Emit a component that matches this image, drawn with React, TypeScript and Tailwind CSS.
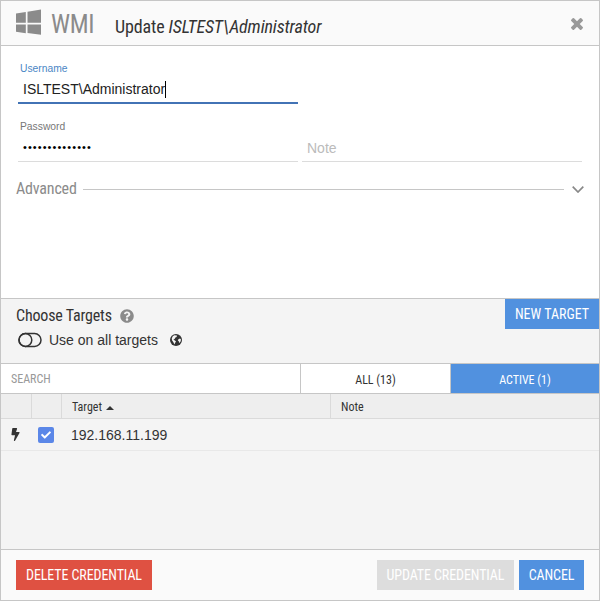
import React, { useState } from "react";
import { FaQuestionCircle, FaBolt, FaCheck } from "react-icons/fa";

const condensed = "font-['Roboto_Condensed','Roboto',sans-serif] font-stretch-condensed whitespace-nowrap";

const WindowsLogo = () => (
  <svg viewBox="0 0 25 26" className="mb-0.5 w-[25px] h-[26px]" fill="#8b8b8b">
    <path d="M0 4.6 9.8 3.1v10.6H0zM11.5 2.7 25 .4v13.3H11.5zM0 15.5h9.8v8.7L0 22.8zM11.5 15.5H25v10.3l-13.5-1.9z" />
  </svg>
);

const CloseIcon = () => (
  <svg viewBox="302 366 1188 1188" className="size-3" fill="#999">
    <path d="M1490 1322q0 40-28 68l-136 136q-28 28-68 28t-68-28l-294-294-294 294q-28 28-68 28t-68-28l-136-136q-28-28-28-68t28-68l294-294-294-294q-28-28-28-68t28-68l136-136q28-28 68-28t68 28l294 294 294-294q28-28 68-28t68 28l136 136q28 28 28 68t-28 68l-294 294 294 294q28 28 28 68z" />
  </svg>
);

const GlobeIcon = () => (
  <svg viewBox="0 0 12 12" className="ml-3 size-3">
    <circle cx="6" cy="6" r="6" fill="#333" />
    <path d="M4.3 1.2 7 1.6 6.6 3 5.4 3.6 4.6 5 3.4 5.4 4.8 6.4 6 7.2 5.2 8.8 4.4 10.6 3.4 8.2 2 6.2 1.8 4.2 2.8 2.2z" fill="#f4f4f4" />
    <path d="M8.4 5.2 10 4.4 11 5.4 10.6 7.6 9.2 9 8.8 7.2 7.8 6.6z" fill="#f4f4f4" />
  </svg>
);

export default function App() {
  const [tab, setTab] = useState<"all" | "active">("active");

  return (
    <div className="flex flex-col w-[600px] h-[601px] border border-[#c6c6c6] bg-white font-['Liberation_Sans',Arial,sans-serif] text-sm text-[#333]">
      <header className="flex items-center h-[45px] shrink-0 pl-[15px] pr-4 bg-[#fafafa] border-b border-[#c6c6c6]">
        <WindowsLogo />
        <span className={`${condensed} ml-2.5 pt-1 text-[25px] leading-8 tracking-[-0.4px] text-[#8b8b8b]`}>WMI</span>
        <h1 className={`${condensed} ml-[21px] pt-[7px] text-lg leading-6 tracking-[-0.13px]`}>
          Update <i>ISLTEST\Administrator</i>
        </h1>
        <button className="ml-auto pt-0.5">
          <CloseIcon />
        </button>
      </header>

      <main className="h-[252px] shrink-0 px-[17px] pt-4">
        <div className="w-[280px] h-[42px] border-b-2 border-[#4273b5]">
          <label className="block pl-0.5 text-[10.3px] leading-[14px] text-[#4a86c5]">Username</label>
          <div className="flex items-center pl-[5px] h-[26px] text-[#222]">
            ISLTEST\Administrator
            <span className="w-px h-[17px] bg-black" />
          </div>
        </div>
        <div className="flex gap-1 mt-4">
          <div className="w-[280px] h-[42px] border-b border-[#dcdcdc]">
            <label className="block pl-0.5 text-[10.3px] leading-[14px] text-[#777]">Password</label>
            <div className="pl-[5px] text-[11px] leading-[26px] tracking-[1.07px] text-black">••••••••••••••</div>
          </div>
          <div className="w-[280px] h-[42px] pl-[5px] pt-5 border-b border-[#dcdcdc] text-[#bbb] leading-4">Note</div>
        </div>
        <div className="flex items-center mt-[15px] -mx-0.5 h-6">
          <span className={`${condensed} text-base tracking-[-0.18px] text-[#8b8b8b]`}>Advanced</span>
          <span className="flex-1 h-px ml-1.5 mr-2 bg-[#c6c6c6]" />
          <svg viewBox="0 0 12 7" className="w-3 h-[7px]" fill="none" stroke="#888" strokeWidth="1.7">
            <path d="M.7.7 6 6 11.3.7" />
          </svg>
        </div>
      </main>

      <section className="flex justify-between h-[66px] shrink-0 pl-[15px] bg-[#f4f4f4] border-y border-[#c6c6c6]">
        <div>
          <div className="flex items-center h-8 pt-0.5">
            <h2 className={`${condensed} text-base tracking-[-0.18px]`}>Choose Targets</h2>
            <FaQuestionCircle className="ml-2 size-3.5 text-[#8b8b8b]" />
          </div>
          <div className="flex items-center h-[18px]">
            <svg viewBox="0 0 24 16" className="ml-0.5 w-6 h-4" fill="none" stroke="#333" strokeWidth="1.5">
              <rect x="1" y="1.6" width="22" height="12.8" rx="6.4" />
              <circle cx="7.4" cy="8" r="6.4" />
            </svg>
            <span className="ml-[7px]">Use on all targets</span>
            <GlobeIcon />
          </div>
        </div>
        <button className={`${condensed} w-[94px] h-[30px] bg-[#5191df] text-white text-sm`}>NEW TARGET</button>
      </section>

      <nav className={`${condensed} flex h-[30px] shrink-0 border-b border-[#c6c6c6] text-xs`}>
        <div className="w-[299px] pl-2.5 leading-[30px] text-[#999]">SEARCH</div>
        <button
          onClick={() => setTab("all")}
          className={`w-[150px] pt-0.5 border-l border-[#c6c6c6] ${tab === "all" ? "bg-[#5191df] text-white" : ""}`}
        >
          ALL (13)
        </button>
        <button
          onClick={() => setTab("active")}
          className={`flex-1 pt-0.5 border-l border-[#c6c6c6] ${tab === "active" ? "bg-[#5191df] text-white" : ""}`}
        >
          ACTIVE (1)
        </button>
      </nav>

      <section className="flex-1 bg-[#f4f4f4]">
        <div className={`${condensed} flex h-[25px] bg-[#eee] border-b border-[#dadada] text-xs leading-[26px]`}>
          <span className="w-[31px] border-r border-[#dadada]" />
          <span className="w-[30px] border-r border-[#dadada]" />
          <span className="w-[269px] pl-2.5 border-r border-[#dadada]">
            Target
            <svg viewBox="0 0 8 4" className="inline-block ml-1 w-2 h-1" fill="#333">
              <path d="M0 4 4 0 8 4z" />
            </svg>
          </span>
          <span className="pl-2.5">Note</span>
        </div>
        <div className="flex items-center h-8 border-b border-[#e8e8e8]">
          <FaBolt className="ml-2 size-[13px]" />
          <span className="flex items-center justify-center ml-4 size-4 rounded-[2px] bg-[#5b87e8]">
            <FaCheck className="size-2.5 text-white" />
          </span>
          <span className="ml-[17px]">192.168.11.199</span>
        </div>
      </section>

      <footer className={`${condensed} flex items-center h-[51px] shrink-0 px-[15px] bg-[#fafafa] border-t border-[#c6c6c6] text-sm tracking-[-0.1px] text-white`}>
        <button className="w-[136px] h-[30px] bg-[#df5142]">DELETE CREDENTIAL</button>
        <button className="ml-auto w-[137px] h-[30px] bg-[#ddd]" disabled>UPDATE CREDENTIAL</button>
        <button className="ml-[5px] w-[65px] h-[30px] bg-[#5191df]">CANCEL</button>
      </footer>
    </div>
  );
}
